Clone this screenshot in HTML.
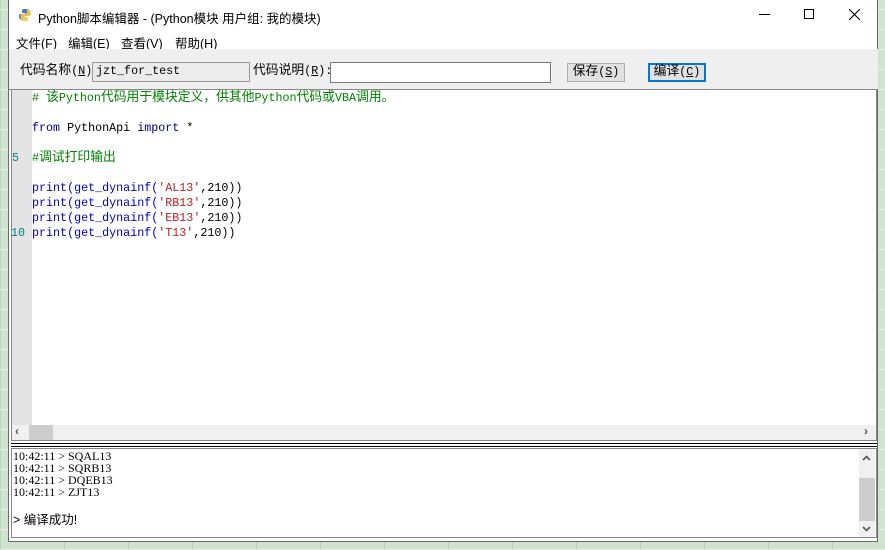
<!DOCTYPE html>
<html><head><meta charset="utf-8"><style>
*{margin:0;padding:0;box-sizing:border-box}
body{width:885px;height:550px;overflow:hidden;position:relative;font-family:"Liberation Sans","Noto Sans CJK SC",sans-serif;font-size:12px;
background:#cfe3cf;background-image:repeating-linear-gradient(0deg,#e6ede6 0 1px,transparent 1px 20px),repeating-linear-gradient(90deg,#b9d5b9 0 1px,transparent 1px 64px)}
.a{position:absolute}
.win{left:8px;top:0;width:870px;height:542px;background:#fff;border:1px solid #6a6a6a;border-top:none}
.mono{font-family:"Liberation Mono","Noto Sans CJK SC",monospace;font-size:11.7px;line-height:15px;white-space:pre}
.c{font-size:12.8px;line-height:1}
</style></head><body>
<div class="a win">
 <svg class="a" style="left:9px;top:8px" width="14" height="14" viewBox="0 0 14 14"><path d="M7 1C4 1 4 2 4 3v2h3v1H2.5C1 6 1 8 1 9s1 3 2.5 3H5v-2c0-1 1-2 2-2h3c1 0 1.5-1 1.5-2V3C11.5 2 10 1 7 1z" fill="#4b7bb5"/><path d="M7 13c3 0 3-1 3-2V9H7V8h4.5c1.5 0 1.5-2 1.5-3s-1-3-2.5-3H9v2c0 1-1 2-2 2H4C3 6 2.5 7 2.5 8v3C2.5 12 4 13 7 13z" fill="#f2c94c" opacity=".9"/></svg>
 <div class="a" style="left:29px;top:8px;font-size:12.5px;color:#000">Python脚本编辑器 - (Python模块 用户组: 我的模块)</div>
 <div class="a" style="left:750px;top:14px;width:11px;height:1px;background:#000"></div>
 <div class="a" style="left:795px;top:9px;width:10px;height:10px;border:1px solid #000"></div>
 <svg class="a" style="left:840px;top:9px" width="11" height="11"><path d="M0 0L11 11M11 0L0 11" stroke="#000" stroke-width="1.1"/></svg>
 <div class="a" style="left:7px;top:33px;font-size:12.5px">文件(<u>F</u>)</div>
 <div class="a" style="left:59px;top:33px;font-size:12.5px">编辑(<u>E</u>)</div>
 <div class="a" style="left:112px;top:33px;font-size:12.5px">查看(<u>V</u>)</div>
 <div class="a" style="left:166px;top:33px;font-size:12.5px">帮助(<u>H</u>)</div>
 <div class="a" style="left:0;top:49px;width:869px;height:41px;background:#efefef;border-bottom:1px solid #888"></div>
 <div class="a mono" style="left:11px;top:64px"><span class="c">代码名称</span>(<u>N</u>):</div>
 <div class="a mono" style="left:83px;top:62px;width:158px;height:20px;background:#ececec;border:1px solid #999;padding:1px 3px">jzt_for_test</div>
 <div class="a mono" style="left:244px;top:64px"><span class="c">代码说明</span>(<u>R</u>):</div>
 <div class="a" style="left:321px;top:62px;width:221px;height:21px;background:#fff;border:1px solid #7a7a7a"></div>
 <div class="a mono" style="left:558px;top:63px;width:58px;height:19px;background:#e1e1e1;border:1px solid #adadad;text-align:center;line-height:17px"><span class="c">保存</span>(<u>S</u>)</div>
 <div class="a mono" style="left:639px;top:63px;width:58px;height:19px;background:#e1e1e1;border:2px solid #0078d7;text-align:center;line-height:15px"><span class="c">编译</span>(<u>C</u>)</div>
 <div class="a" style="left:2px;top:90px;width:866px;height:351px;border:1px solid #888;border-top:none;background:#fff"></div>
 <div class="a" style="left:3px;top:90px;width:20px;height:335px;background:#e4e4e4"></div>
 <div class="a mono" style="left:3px;top:151px;color:#008080">5</div>
 <div class="a mono" style="left:2px;top:226px;color:#008080">10</div>
 <div class="a mono" style="left:23px;top:91px;color:#000"><span style="color:#008000"># <span class="c">该</span>Python<span class="c">代码用于模块定义，供其</span><span class="c">他</span>Python<span class="c">代码或</span>VBA<span class="c">调用。</span></span>

<span style="color:#00008b">from</span> PythonApi <span style="color:#00008b">import</span> *

<span style="color:#008000">#<span class="c">调试打印输出</span></span>

<span style="color:#0000c0">print(get_dynainf(</span><span style="color:#b22222">'AL13'</span>,210))
<span style="color:#0000c0">print(get_dynainf(</span><span style="color:#b22222">'RB13'</span>,210))
<span style="color:#0000c0">print(get_dynainf(</span><span style="color:#b22222">'EB13'</span>,210))
<span style="color:#0000c0">print(get_dynainf(</span><span style="color:#b22222">'T13'</span>,210))</div>
 <div class="a" style="left:3px;top:425px;width:864px;height:15px;background:#f0f0f0"></div>
 <div class="a" style="left:20px;top:425px;width:24px;height:15px;background:#cdcdcd"></div>
 <div class="a" style="left:6px;top:424px;font-size:12px;color:#555;font-weight:bold">‹</div>
 <div class="a" style="left:855px;top:424px;font-size:12px;color:#555;font-weight:bold">›</div>
 <div class="a" style="left:2px;top:443px;width:866px;height:1px;background:#000"></div>
 <div class="a" style="left:2px;top:446px;width:866px;height:1px;background:#000"></div>
 <div class="a" style="left:2px;top:448px;width:866px;height:90px;border:1px solid #888;background:#fff"></div>
 <div class="a mono" style="left:4px;top:450px;font-size:12px;line-height:12px;font-family:'Liberation Serif','Noto Sans CJK SC',serif">10:42:11 &gt; SQAL13
10:42:11 &gt; SQRB13
10:42:11 &gt; DQEB13
10:42:11 &gt; ZJT13</div>
 <div class="a" style="left:4px;top:509px;font-size:12.5px">&gt; 编译成功!</div>
 <div class="a" style="left:850px;top:449px;width:16px;height:88px;background:#f0f0f0"></div>
 <div class="a" style="left:850px;top:478px;width:16px;height:43px;background:#cdcdcd"></div>
 <svg class="a" style="left:853px;top:455px" width="9" height="6"><path d="M1 5L4.5 1.5L8 5" stroke="#555" stroke-width="1.6" fill="none"/></svg>
 <svg class="a" style="left:853px;top:526px" width="9" height="6"><path d="M1 1L4.5 4.5L8 1" stroke="#555" stroke-width="1.6" fill="none"/></svg>
</div>
</body></html>
